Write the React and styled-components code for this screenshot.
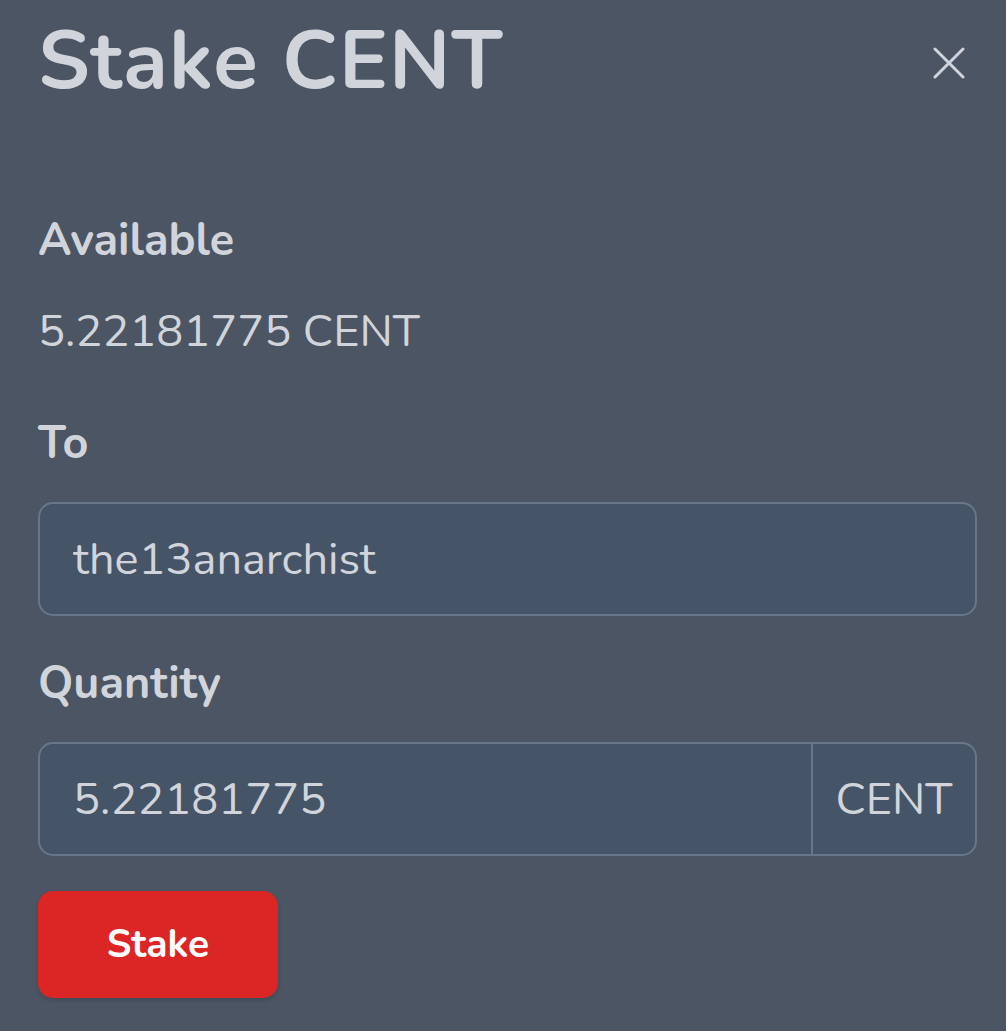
import React, { useState } from 'react'
import styled, { createGlobalStyle } from 'styled-components'

const GlobalStyle = createGlobalStyle`
  html, body {
    margin: 0;
    padding: 0;
    background: #4b5563;
  }
  body {
    font-family: Nunito, Lato, "Open Sans", sans-serif;
    color: #d1d5db;
  }
`

const Modal = styled.div`
  width: 1006px;
  height: 1031px;
  box-sizing: border-box;
  padding: 20px 29px 0 38px;
  background: #4b5563;
  display: flex;
  flex-direction: column;
`

const Header = styled.div`
  display: flex;
  justify-content: space-between;
  align-items: flex-start;
`

const Title = styled.h1`
  margin: 0;
  font-size: 82px;
  line-height: 1;
  font-weight: 700;
  letter-spacing: 1.1px;
  color: #d1d5db;
`

const CloseButton = styled.button`
  margin-top: 27px;
  margin-right: 12px;
  width: 32px;
  height: 32px;
  padding: 0;
  border: 0;
  background: transparent;
  color: #d1d5db;
  cursor: pointer;
  display: flex;

  svg {
    width: 32px;
    height: 32px;
  }
`

const Label = styled.div`
  margin-top: ${p => p.$gap}px;
  font-size: 45px;
  line-height: 1;
  font-weight: 700;
`

const Value = styled.div`
  margin-top: 46px;
  font-size: 45px;
  line-height: 1;
`

const Field = styled.div`
  margin-top: 36px;
  height: 114px;
  box-sizing: border-box;
  display: flex;
  align-items: stretch;
  border: 2px solid #68768a;
  border-radius: 15px;
  background: #465467;
  overflow: hidden;
`

const Input = styled.input`
  flex: 1;
  min-width: 0;
  border: 0;
  outline: none;
  background: transparent;
  padding: 0 33px;
  font-family: inherit;
  font-size: 45px;
  color: #d1d5db;
`

const Addon = styled.span`
  width: 164px;
  box-sizing: border-box;
  border-left: 2px solid #68768a;
  display: flex;
  align-items: center;
  justify-content: center;
  font-size: 45px;
  color: #d1d5db;
`

const SubmitButton = styled.button`
  margin-top: 35px;
  width: 240px;
  height: 107px;
  border: 0;
  border-radius: 15px;
  background: #dc2626;
  color: #ffffff;
  font-family: inherit;
  font-size: 39px;
  font-weight: 700;
  cursor: pointer;
  box-shadow: 0 2px 4px rgba(0, 0, 0, 0.15);
`

export default function App() {
  const [to, setTo] = useState('the13anarchist')
  const [qty, setQty] = useState('5.22181775')

  return (
    <>
      <GlobalStyle />
      <Modal>
        <Header>
          <Title>Stake CENT</Title>
          <CloseButton aria-label="Close">
            <svg viewBox="0 0 32 32" fill="none" stroke="currentColor" strokeWidth="3" strokeLinecap="round">
              <path d="M2 2 L30 30 M30 2 L2 30" />
            </svg>
          </CloseButton>
        </Header>

        <Label $gap={116}>Available</Label>
        <Value>5.22181775 CENT</Value>

        <Label $gap={67}>To</Label>
        <Field>
          <Input value={to} onChange={e => setTo(e.target.value)} />
        </Field>

        <Label $gap={45}>Quantity</Label>
        <Field>
          <Input value={qty} onChange={e => setQty(e.target.value)} />
          <Addon>CENT</Addon>
        </Field>

        <div>
          <SubmitButton>Stake</SubmitButton>
        </div>
      </Modal>
    </>
  )
}
